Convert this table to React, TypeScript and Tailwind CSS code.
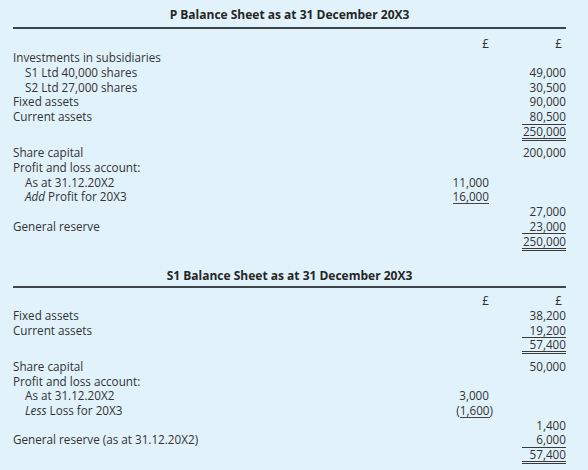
import React from 'react';

type Cell = { v: string; line?: 'single' | 'double'; neg?: boolean };
type Row = { label?: React.ReactNode; indent?: boolean; c1?: Cell; c2?: Cell; gapBefore?: boolean };

function Val({ cell, wide }: { cell: Cell; wide?: boolean }) {
  if (cell.neg) {
    return (
      <div className="h-[14.7px] text-right">
        <span className="-mr-[4px]">
          (<span className="inline-block h-[14.5px] border-b border-[#444]">{cell.v}</span>)
        </span>
      </div>
    );
  }
  const line =
    cell.line === 'double'
      ? 'h-[17px] border-b-[3px] border-double border-[#3a3a3a]'
      : cell.line === 'single'
      ? 'h-[15.5px] border-b border-[#3a3a3a]'
      : 'h-[14.7px]';
  if (wide) {
    return <div className={`ml-auto w-[44px] text-right ${line}`}>{cell.v}</div>;
  }
  return (
    <div className="h-[14.7px] text-right">
      <span className={`inline-block ${cell.line ? 'h-[14.5px] border-b border-[#444]' : ''}`}>{cell.v}</span>
    </div>
  );
}

function Sheet({ title, rows, first }: { title: string; rows: Row[]; first?: boolean }) {
  return (
    <section className={first ? '' : 'mt-[20px]'}>
      <h2 className="text-center text-[12px] font-bold leading-[16px] text-[#262626]">{title}</h2>
      <div className={`h-[2px] bg-[#3d474c] ${first ? 'mt-[4px]' : 'mt-[2px]'}`} />
      <div className={`grid h-[14.7px] grid-cols-[1fr_60px_77px] ${first ? 'mt-[6.6px]' : 'mt-[5px]'}`}>
        <div />
        <div className="text-right">£</div>
        <div className="pr-[4px] text-right">£</div>
      </div>
      {rows.map((r, i) => (
        <div
          key={i}
          className={`grid h-[14.7px] grid-cols-[1fr_60px_77px] ${r.gapBefore ? 'mt-[7px]' : ''}`}
        >
          <div className={r.indent ? 'pl-[12px]' : ''}>{r.label}</div>
          <div>{r.c1 && <Val cell={r.c1} />}</div>
          <div>{r.c2 && <Val cell={r.c2} wide />}</div>
        </div>
      ))}
    </section>
  );
}

const pRows: Row[] = [
  { label: 'Investments in subsidiaries' },
  { label: 'S1 Ltd 40,000 shares', indent: true, c2: { v: '49,000' } },
  { label: 'S2 Ltd 27,000 shares', indent: true, c2: { v: '30,500' } },
  { label: 'Fixed assets', c2: { v: '90,000' } },
  { label: 'Current assets', c2: { v: '80,500', line: 'single' } },
  { c2: { v: '250,000', line: 'double' } },
  { label: 'Share capital', c2: { v: '200,000' }, gapBefore: true },
  { label: 'Profit and loss account:' },
  { label: 'As at 31.12.20X2', indent: true, c1: { v: '11,000' } },
  {
    label: (
      <>
        <i>Add</i> Profit for 20X3
      </>
    ),
    indent: true,
    c1: { v: '16,000', line: 'single' },
  },
  { c2: { v: '27,000' } },
  { label: 'General reserve', c2: { v: '23,000', line: 'single' } },
  { c2: { v: '250,000', line: 'double' } },
];

const s1Rows: Row[] = [
  { label: 'Fixed assets', c2: { v: '38,200' } },
  { label: 'Current assets', c2: { v: '19,200', line: 'single' } },
  { c2: { v: '57,400', line: 'double' } },
  { label: 'Share capital', c2: { v: '50,000' }, gapBefore: true },
  { label: 'Profit and loss account:' },
  { label: 'As at 31.12.20X2', indent: true, c1: { v: '3,000' } },
  {
    label: (
      <>
        <i>Less</i> Loss for 20X3
      </>
    ),
    indent: true,
    c1: { v: '1,600', neg: true },
  },
  { c2: { v: '1,400' } },
  { label: 'General reserve (as at 31.12.20X2)', c2: { v: '6,000', line: 'single' } },
  { c2: { v: '57,400', line: 'double' } },
];

export default function App() {
  return (
    <main
      className="min-h-[470px] w-[588px] bg-[#e1f2fb] pl-[13px] pr-[22px] pt-[7px] text-[11.7px] leading-[14.7px] text-[#333]"
      style={{ fontFamily: '"Open Sans", "Noto Sans", sans-serif' }}
    >
      <Sheet first title="P Balance Sheet as at 31 December 20X3" rows={pRows} />
      <Sheet title="S1 Balance Sheet as at 31 December 20X3" rows={s1Rows} />
    </main>
  );
}
